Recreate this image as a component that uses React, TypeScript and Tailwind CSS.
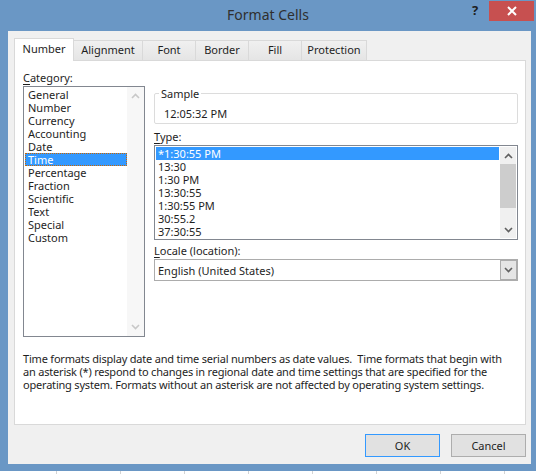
import React from "react";

// ── Data ─────────────────────────────────────────────────────────────────────
const categories = [
  "General",
  "Number",
  "Currency",
  "Accounting",
  "Date",
  "Time",
  "Percentage",
  "Fraction",
  "Scientific",
  "Text",
  "Special",
  "Custom",
];

const timeTypes = [
  "*1:30:55 PM",
  "13:30",
  "1:30 PM",
  "13:30:55",
  "1:30:55 PM",
  "30:55.2",
  "37:30:55",
];

const tabs = [
  { label: "Alignment", w: "w-[70px]" },
  { label: "Font", w: "w-[54px]" },
  { label: "Border", w: "w-[54px]" },
  { label: "Fill", w: "w-[54px]" },
  { label: "Protection", w: "w-[66px]" },
];

// Help text, one entry per rendered line (matches the dialog's wrapping)
const helpLines = [
  "Time formats display date and time serial numbers as date values.\u00a0 Time formats that begin with",
  "an asterisk (*) respond to changes in regional date and time settings that are specified for the",
  "operating system. Formats without an asterisk are not affected by operating system settings.",
];

// ── Small chevrons used by scroll bars and the combo box ─────────────────────
function Chevron({ up = false, color = "#606060" }: { up?: boolean; color?: string }) {
  return (
    <svg width="9" height="6" viewBox="0 0 9 6">
      <polyline
        points={up ? "1,5 4.5,1.5 8,5" : "1,1 4.5,4.5 8,1"}
        fill="none"
        stroke={color}
        strokeWidth="1.6"
      />
    </svg>
  );
}

// ── Label with an underlined access key ──────────────────────────────────────
function AccessLabel({ k, rest }: { k: string; rest: string }) {
  return (
    <div className="h-[13px] leading-[13px] text-[#1e1e1e]">
      <span className="underline underline-offset-[2px]">{k}</span>
      {rest}
    </div>
  );
}

export default function App() {
  return (
    <div className="w-[536px] h-[474px] flex flex-col bg-[#6a97c5] overflow-hidden font-['Noto_Sans',sans-serif] text-[11px] text-[#1e1e1e]">
      {/* ── TITLE BAR ── */}
      <div className="relative h-[31px] shrink-0 flex items-center justify-center">
        <span className="text-[14px] text-[#2f2f2f] leading-none -mt-[1px]">Format Cells</span>
        <span className="absolute left-[472px] top-[4px] text-[13px] font-bold text-[#1e1e1e] leading-none">?</span>
        <div className="absolute left-[489px] top-[1px] w-[45px] h-[20px] bg-[#c75050] flex items-center justify-center">
          <svg width="10" height="10" viewBox="0 0 10 10">
            <path d="M1 1 L9 9 M9 1 L1 9" stroke="#ffffff" strokeWidth="2" />
          </svg>
        </div>
      </div>

      {/* ── CLIENT AREA ── */}
      <div className="ml-[8px] mr-[5px] h-[433px] shrink-0 bg-[#f0f0f0] pl-[6px] pr-[5px] pt-[7px] flex flex-col">
        {/* Tabs */}
        <div className="h-[22px] flex items-end">
          <div className="relative z-10 w-[60px] h-[23px] -mb-[1px] bg-white border border-b-0 border-[#d9d9d9] flex items-center justify-center pb-[1px]">
            Number
          </div>
          {tabs.map((t) => (
            <div
              key={t.label}
              className={`${t.w} h-[20px] -ml-px first:ml-0 bg-gradient-to-b from-[#f0f0f0] to-[#e5e5e5] border border-b-0 border-[#d9d9d9] flex items-center justify-center`}
            >
              {t.label}
            </div>
          ))}
        </div>

        {/* Panel */}
        <div className="h-[365px] bg-white border border-[#d9d9d9] flex flex-col pl-[8px] pt-[10px]">
          <div className="flex gap-[9px]">
            {/* Category column */}
            <div className="w-[122px] flex flex-col">
              <AccessLabel k="C" rest="ategory:" />
              <div className="mt-[2px] h-[251px] border border-[#828790] flex pt-[1px] pl-[1px]">
                <div className="flex-1 flex flex-col">
                  {categories.map((c) =>
                    c === "Time" ? (
                      <div
                        key={c}
                        className="h-[13px] leading-[12px] pl-[2px] bg-[#3399ff] text-white border border-dotted border-[#cc6600]"
                      >
                        {c}
                      </div>
                    ) : (
                      <div key={c} className="h-[13px] leading-[13px] pl-[3px]">
                        {c}
                      </div>
                    )
                  )}
                </div>
                <div className="w-[17px] bg-[#f7f7f7] flex flex-col items-center justify-between py-[6px] -mt-[1px]">
                  <Chevron up color="#c8c8c8" />
                  <Chevron color="#c8c8c8" />
                </div>
              </div>
            </div>

            {/* Right column */}
            <div className="w-[364px] flex flex-col pt-[16px]">
              <fieldset className="border border-[#dcdcdc] rounded-[2px] pb-[3px]">
                <legend className="h-[13px] leading-[13px] ml-[4px] px-[2px] text-[#1e1e1e]">Sample</legend>
                <div className="h-[13px] leading-[13px] mt-[7px] ml-[9px]">12:05:32 PM</div>
              </fieldset>

              <div className="mt-[6px]">
                <AccessLabel k="T" rest="ype:" />
              </div>
              <div className="mt-[2px] h-[95px] border border-[#828790] flex p-[1px]">
                <div className="flex-1 flex flex-col">
                  {timeTypes.map((t, i) => (
                    <div
                      key={t}
                      className={`h-[13px] leading-[13px] pl-[2px] ${i === 0 ? "bg-[#3399ff] text-white" : ""}`}
                    >
                      {t}
                    </div>
                  ))}
                </div>
                <div className="w-[16px] ml-[1px] bg-[#f0f0f0] flex flex-col">
                  <div className="h-[17px] flex items-center justify-center">
                    <Chevron up />
                  </div>
                  <div className="h-[44px] bg-[#cdcdcd]" />
                  <div className="flex-1" />
                  <div className="h-[17px] flex items-center justify-center">
                    <Chevron />
                  </div>
                </div>
              </div>

              <div className="mt-[4px]">
                <AccessLabel k="L" rest="ocale (location):" />
              </div>
              <div className="mt-[2px] h-[22px] border border-[#acacac] bg-white flex items-center">
                <span className="flex-1 pl-[3px] leading-[13px]">English (United States)</span>
                <div className="w-[17px] h-[20px] bg-[#e5e5e5] border border-[#acacac] flex items-center justify-center">
                  <Chevron />
                </div>
              </div>
            </div>
          </div>

          {/* Description */}
          <div className="mt-[15px] flex flex-col tracking-[-0.2px] text-[#1e1e1e]">
            {helpLines.map((l) => (
              <div key={l} className="h-[13px] leading-[13px] whitespace-nowrap">
                {l}
              </div>
            ))}
          </div>
        </div>

        {/* Buttons */}
        <div className="mt-[9px] flex justify-end gap-[11px]">
          <button className="w-[75px] h-[23px] bg-[#e1e1e1] border border-[#3399ff] text-[#1e1e1e] leading-none">
            OK
          </button>
          <button className="w-[75px] h-[23px] bg-[#e1e1e1] border border-[#adadad] text-[#1e1e1e] leading-none">
            Cancel
          </button>
        </div>
      </div>

      {/* ── SHEET STRIP BEHIND THE DIALOG ── */}
      <div className="mt-[7px] flex-1 bg-white flex">
        <div className="w-[57px] border-r border-[#d4d4d4]" />
        <div className="w-[64px] border-r border-[#d4d4d4]" />
        <div className="w-[64px] border-r border-[#d4d4d4]" />
        <div className="w-[64px] border-r border-[#d4d4d4]" />
        <div className="w-[64px] border-r border-[#d4d4d4]" />
        <div className="w-[64px] border-r border-[#d4d4d4]" />
        <div className="w-[64px] border-r border-[#d4d4d4]" />
        <div className="w-[64px] border-r border-[#d4d4d4]" />
      </div>
    </div>
  );
}
